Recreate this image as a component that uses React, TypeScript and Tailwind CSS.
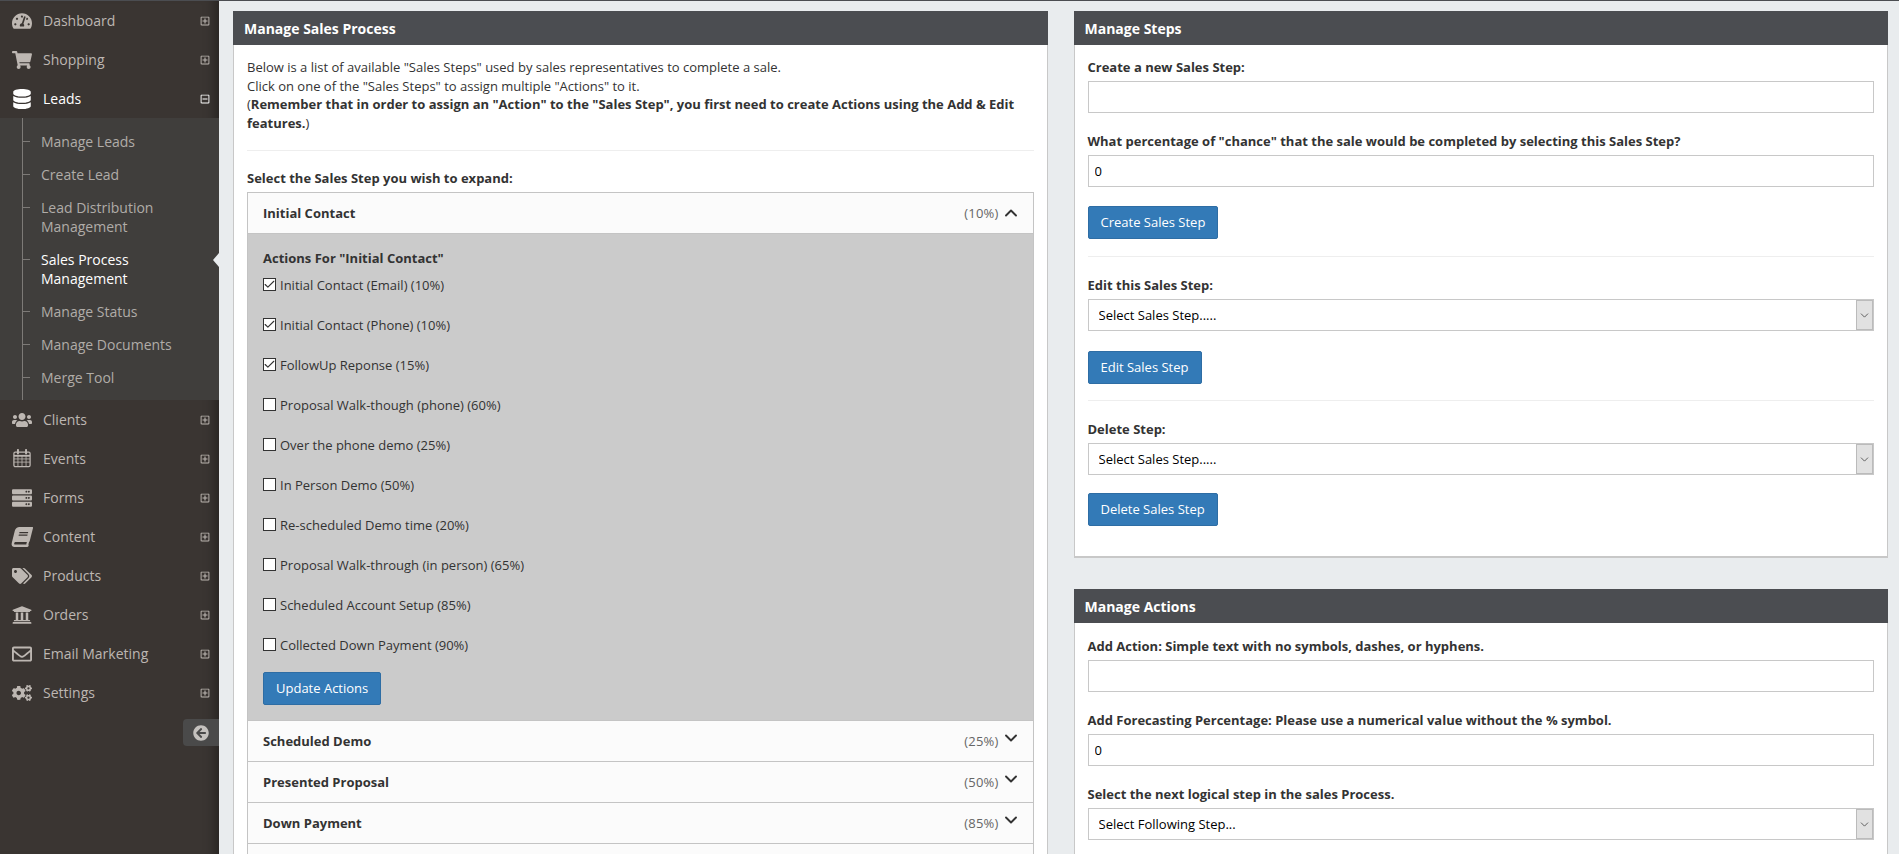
import React from "react";
import { FaTachometerAlt, FaShoppingCart, FaDatabase, FaUsers, FaServer, FaBook, FaTags, FaUniversity, FaRegEnvelope, FaCogs, FaArrowCircleLeft, FaRegPlusSquare, FaRegMinusSquare } from "react-icons/fa";
import { Check, ChevronDown, ChevronUp } from "lucide-react";

type IconT = React.ComponentType<{ className?: string }>;
type Item = { label: string; Icon: IconT };

function CalendarIcon({ className }: { className?: string }) {
  return (
    <svg viewBox="0 0 20 20" className={className} width="18" height="19" fill="none" stroke="currentColor">
      <rect x="1" y="3" width="18" height="16" rx="1.5" strokeWidth="1.4" />
      <path d="M1 7h18" strokeWidth="2" />
      <path d="M5.5 7v12M10 7v12M14.5 7v12M1 10.5h18M1 14h18" strokeWidth="0.9" />
      <path d="M5.5 0.5v4M14.5 0.5v4" strokeWidth="2.2" strokeLinecap="round" />
    </svg>
  );
}

function TiltedBook({ className }: { className?: string }) {
  return <FaBook className={`-skew-x-[14deg] ${className ?? ""}`} />;
}

function NavRow({ label, Icon, open }: Item & { open?: boolean }) {
  const Toggle = open ? FaRegMinusSquare : FaRegPlusSquare;
  return (
    <div className={`flex h-[39px] items-center pl-3 pr-[9px] text-[14px] ${open ? "text-white" : "text-[#bdb7b2]"}`}>
      <span className="flex w-5 justify-center"><Icon className="text-[20px]" /></span>
      <span className="ml-[11px] flex-1">{label}</span>
      <Toggle className="text-[10px]" />
    </div>
  );
}

function SubItem({ label, active }: { label: string; active?: boolean }) {
  return (
    <div className={`relative py-[7px] pl-[41px] pr-4 text-[14px] leading-[19px] ${active ? "text-white" : "text-[#b0aca8]"}`}>
      <span className="absolute left-[23px] top-[16px] h-px w-[7px] bg-[#7d7a77]" />
      {label}
      {active && <span className="absolute right-0 top-[10px] h-0 w-0 border-y-[7px] border-r-[6px] border-y-transparent border-r-[#e9ecee]" />}
    </div>
  );
}

function Sidebar() {
  return (
    <aside className="relative w-[219px] shrink-0 bg-[#3a3532] shadow-[inset_-14px_0_12px_-10px_rgba(0,0,0,0.35)]">
      <NavRow label="Dashboard" Icon={FaTachometerAlt} />
      <NavRow label="Shopping" Icon={FaShoppingCart} />
      <NavRow label="Leads" Icon={FaDatabase} open />
      <div className="relative bg-[#403e3c] pb-[6px] pt-[7px]">
        <span className="absolute bottom-0 left-[22px] top-0 w-px bg-[#7d7a77]" />
        <SubItem label="Manage Leads" />
        <SubItem label="Create Lead" />
        <SubItem label="Lead Distribution Management" />
        <SubItem label="Sales Process Management" active />
        <SubItem label="Manage Status" />
        <SubItem label="Manage Documents" />
        <SubItem label="Merge Tool" />
      </div>
      <NavRow label="Clients" Icon={FaUsers} />
      <NavRow label="Events" Icon={CalendarIcon} />
      <NavRow label="Forms" Icon={FaServer} />
      <NavRow label="Content" Icon={TiltedBook} />
      <NavRow label="Products" Icon={FaTags} />
      <NavRow label="Orders" Icon={FaUniversity} />
      <NavRow label="Email Marketing" Icon={FaRegEnvelope} />
      <NavRow label="Settings" Icon={FaCogs} />
      <div className="ml-auto mt-[7px] flex h-[27px] w-9 items-center rounded-l-[4px] bg-[#4a4a4a] pl-[10px] text-[#c4c1be]">
        <FaArrowCircleLeft className="text-[16px]" />
      </div>
    </aside>
  );
}

function Panel({ title, className = "", children }: { title: string; className?: string; children: React.ReactNode }) {
  return (
    <section className={className}>
      <h2 className="flex h-[34px] items-center bg-[#4b4d51] px-[11px] text-[14px] font-bold text-white">{title}</h2>
      <div className="border-x border-b-2 border-[#c8c8c8] bg-white">{children}</div>
    </section>
  );
}

const labelCls = "mb-[4.5px] block text-[13px] font-bold leading-[18.5px] text-[#333]";

function TextField({ label, value }: { label: string; value?: string }) {
  return (
    <div className="mb-[19px]">
      <label className={labelCls}>{label}</label>
      <input readOnly value={value ?? ""} className="block h-8 w-full border border-[#c8c8c8] bg-white px-[6px] text-[13px] text-black outline-none" />
    </div>
  );
}

function SelectField({ label, placeholder, className }: { label: string; placeholder: string; className: string }) {
  return (
    <div className={className}>
      <label className={labelCls}>{label}</label>
      <div className="relative h-8">
        <select className="block h-8 w-full appearance-none border border-[#c8c8c8] bg-white pl-[10px] pt-[2px] text-[13px] text-black outline-none">
          <option>{placeholder}</option>
        </select>
        <span className="pointer-events-none absolute bottom-px right-px top-px flex w-[17px] items-center justify-center border border-[#bbb] bg-[#e1e1e1] text-[#444]">
          <ChevronDown size={13} strokeWidth={1.5} />
        </span>
      </div>
    </div>
  );
}

function Btn({ children }: { children: React.ReactNode }) {
  return (
    <button className="block h-[33px] rounded-[2px] border border-[#2e6da4] bg-[#337ab7] px-3 text-[13px] text-white">{children}</button>
  );
}

const actions: [string, boolean][] = [
  ["Initial Contact (Email) (10%)", true],
  ["Initial Contact (Phone) (10%)", true],
  ["FollowUp Reponse (15%)", true],
  ["Proposal Walk-though (phone) (60%)", false],
  ["Over the phone demo (25%)", false],
  ["In Person Demo (50%)", false],
  ["Re-scheduled Demo time (20%)", false],
  ["Proposal Walk-through (in person) (65%)", false],
  ["Scheduled Account Setup (85%)", false],
  ["Collected Down Payment (90%)", false],
];

function AccHeader({ title, pct, open }: { title: string; pct: string; open?: boolean }) {
  return (
    <div className="flex h-[41px] items-center border-b border-[#c4c4c4] bg-[#fbfbfb] pl-[15px] pr-[13px] text-[13px]">
      <span className="flex-1 font-bold text-[#333]">{title}</span>
      <span className="tracking-[0.2px] text-[#666]">{pct}</span>
      {open ? (
        <ChevronUp size={20} strokeWidth={2.3} className="ml-[2px] -mr-[1px] text-[#333]" />
      ) : (
        <ChevronDown size={20} strokeWidth={2.3} className="ml-[2px] -mr-[1px] -translate-y-[3px] text-[#333]" />
      )}
    </div>
  );
}

function ActionRow({ text, checked }: { text: string; checked: boolean }) {
  return (
    <label className="flex h-10 items-center text-[13px] text-[#333]">
      <span className="relative mr-[4px] flex h-[13px] w-[13px] shrink-0 -translate-y-px items-center justify-center border border-[#333] bg-white">
        <input type="checkbox" readOnly checked={checked} className="absolute inset-0 appearance-none" />
        {checked && <Check size={13} strokeWidth={2.1} className="shrink-0 text-[#333]" />}
      </span>
      {text}
    </label>
  );
}

export default function App() {
  return (
    <div className="h-screen overflow-hidden bg-[#e9ecee] font-['Open_Sans',sans-serif]">
      <div className="h-px bg-[#4b4d51]" />
      <div className="flex h-[853px]">
        <Sidebar />
        <main className="grid flex-1 grid-cols-2 items-start gap-x-[26px] pl-[14px] pr-[11px] pt-[10px]">
          <Panel title="Manage Sales Process">
            <div className="px-[13px] pb-6 pt-[13px]">
              <div className="text-[13px] leading-[18.6px] text-[#333]">
                <p>Below is a list of available "Sales Steps" used by sales representatives to complete a sale.</p>
                <p>Click on one of the "Sales Steps" to assign multiple "Actions" to it.</p>
                <p>(<b>Remember that in order to assign an "Action" to the "Sales Step", you first need to create Actions using the Add &amp; Edit features.</b>)</p>
              </div>
              <hr className="my-[18px] border-[#eeeeee]" />
              <div className={labelCls}>Select the Sales Step you wish to expand:</div>
              <div className="border-x border-t border-[#c4c4c4]">
                <AccHeader title="Initial Contact" pct="(10%)" open />
                <div className="border-b border-[#c4c4c4] bg-[#cbcbcb] px-[15px] pb-[15px] pt-[15px]">
                  <div className="-mb-[2.5px] text-[13px] font-bold leading-[18.5px] text-[#333]">Actions For "Initial Contact"</div>
                  {actions.map(([t, c]) => <ActionRow key={t} text={t} checked={c} />)}
                  <div className="mt-[7px]"><Btn>Update Actions</Btn></div>
                </div>
                <AccHeader title="Scheduled Demo" pct="(25%)" />
                <AccHeader title="Presented Proposal" pct="(50%)" />
                <AccHeader title="Down Payment" pct="(85%)" />
                <div className="h-[41px] bg-[#fbfbfb]" />
              </div>
            </div>
          </Panel>
          <div>
            <Panel title="Manage Steps">
              <div className="px-[13px] pb-[30px] pt-[13px]">
                <TextField label="Create a new Sales Step:" />
                <TextField label='What percentage of "chance" that the sale would be completed by selecting this Sales Step?' value="0" />
                <Btn>Create Sales Step</Btn>
                <hr className="mb-[19px] mt-[17px] border-[#eeeeee]" />
                <SelectField className="mb-5" label="Edit this Sales Step:" placeholder="Select Sales Step....." />
                <Btn>Edit Sales Step</Btn>
                <hr className="mb-[19px] mt-4 border-[#eeeeee]" />
                <SelectField className="mb-[18px]" label="Delete Step:" placeholder="Select Sales Step....." />
                <Btn>Delete Sales Step</Btn>
              </div>
            </Panel>
            <Panel title="Manage Actions" className="mt-[31px]">
              <div className="px-[13px] pb-6 pt-[14px]">
                <TextField label="Add Action: Simple text with no symbols, dashes, or hyphens." />
                <TextField label="Add Forecasting Percentage: Please use a numerical value without the % symbol." value="0" />
                <SelectField className="mb-5" label="Select the next logical step in the sales Process." placeholder="Select Following Step..." />
              </div>
            </Panel>
          </div>
        </main>
      </div>
    </div>
  );
}
